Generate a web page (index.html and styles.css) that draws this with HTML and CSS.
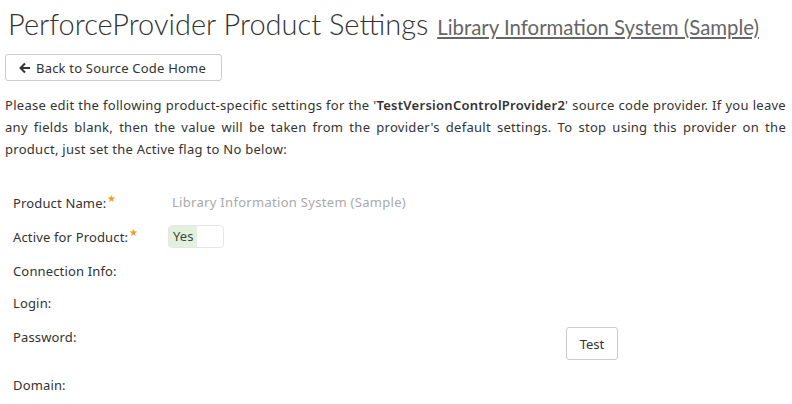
FILE: index.html
```html
<!DOCTYPE html>
<html>
<head>
<meta charset="utf-8">
<link rel="stylesheet" href="styles.css">
</head>
<body>
<h1 class="title">PerforceProvider Product Settings <a class="sub" href="#">Library Information System (Sample)</a></h1>
<button class="btn back"><svg class="arrow" width="12" height="12" viewBox="0 0 12 12"><path d="M11 6H2M6 1.5L1.5 6 6 10.5" fill="none" stroke="#333" stroke-width="2"/></svg> Back to Source Code Home</button>
<p class="intro">Please edit the following product-specific settings for the '<b>TestVersionControlProvider2</b>' source code provider. If you leave any fields blank, then the value will be taken from the provider's default settings. To stop using this provider on the product, just set the Active flag to No below:</p>
<div class="form">
  <div class="row"><div class="label">Product Name:<span class="req">★</span></div><div class="val muted">Library Information System (Sample)</div></div>
  <div class="row"><div class="label">Active for Product:<span class="req">★</span></div><div class="val"><div class="toggle"><span class="on">Yes</span><span class="off"></span></div></div></div>
  <div class="row short"><div class="label">Connection Info:</div></div>
  <div class="row"><div class="label">Login:</div></div>
  <div class="row tall"><div class="label">Password:</div><div class="side"><button class="btn test">Test</button></div></div>
  <div class="row"><div class="label">Domain:</div></div>
</div>
</body>
</html>
```
FILE: styles.css
```css
body {
  margin: 0;
  padding: 0 6px 0 5px;
  font-family: "Noto Sans", sans-serif;
  font-size: 13px;
  color: #333;
  background: #fff;
}
.title {
  margin: 0;
  padding: 6px 0 0 3px;
  height: 48px;
  box-sizing: border-box;
  font-family: Lato, sans-serif;
  font-weight: 300;
  font-size: 29px;
  color: #333;
  white-space: nowrap;
}
.sub {
  font-family: Lato, sans-serif;
  font-weight: 400;
  font-size: 20.4px;
  color: #666;
  text-decoration: underline;
  margin-left: 1px;
}
.btn {
  font-family: "Noto Sans", sans-serif;
  font-size: 13px;
  color: #333;
  background: #fff;
  border: 1px solid #ccc;
  border-radius: 3px;
  padding: 0;
}
.back {
  display: flex;
  align-items: center;
  gap: 5px;
  margin-top: 6px;
  width: 217px;
  height: 27px;
  padding-left: 13px;
  letter-spacing: 0.2px;
}
.arrow { display: block; }
.intro {
  margin: 13px 0 0;
  line-height: 22px;
  text-align: justify;
  font-size: 13px;
  letter-spacing: 0.28px;
}
.intro b { font-weight: 600; }
.form {
  margin-top: 25px;
  padding-left: 8px;
  letter-spacing: 0.15px;
}
.row {
  display: flex;
  align-items: flex-start;
  height: 34px;
}
.row.short { height: 32px; }
.row.tall { height: 48px; }
.label {
  width: 159px;
  line-height: 34px;
  white-space: nowrap;
  padding-top: 1px;
  box-sizing: border-box;
}
.req {
  color: #f39a1f;
  font-size: 10px;
  vertical-align: 6px;
  line-height: 0;
  margin-left: 1px;
}
.val {
  height: 34px;
  display: flex;
  align-items: center;
}
.muted { color: #aaa; letter-spacing: 0.3px; }
.toggle {
  display: flex;
  margin-left: -4px;
  width: 56px;
  height: 23px;
  border: 1px solid #e6e6e6;
  border-radius: 4px;
  box-sizing: border-box;
  overflow: hidden;
}
.toggle .on {
  width: 28px;
  background: #e1f1dc;
  color: #444;
  line-height: 21px;
  padding-left: 4px;
  box-sizing: border-box;
}
.toggle .off { flex: 1; }
.side {
  margin-left: 394px;
  padding-top: 8px;
}
.test {
  width: 52px;
  height: 33px;
}
```
